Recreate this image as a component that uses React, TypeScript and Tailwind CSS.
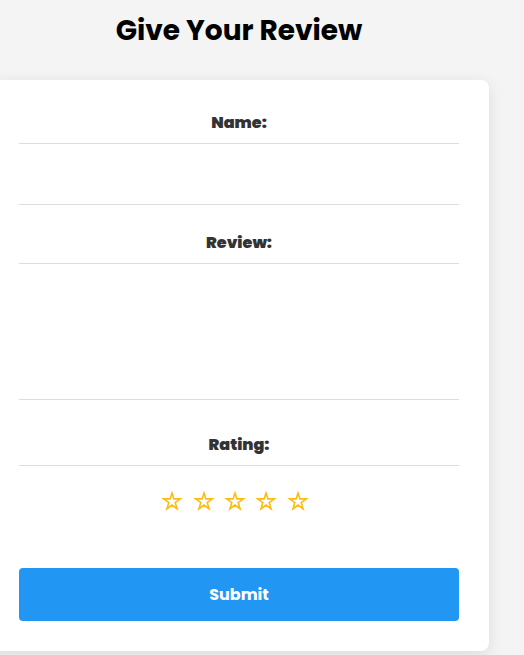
import { useState } from "react";

const labelClass =
  "block h-[34px] border-b border-[#dddddd] pt-px text-center text-base leading-6 font-black text-[#333333]";
const fieldClass =
  "block w-full resize-none border-b border-[#dddddd] bg-transparent px-3 text-base text-[#333333] outline-none";

function Star({ filled }: { filled: boolean }) {
  return (
    <svg viewBox="0 0 22 22" className="size-[22px]" aria-hidden="true">
      <path
        d="M11 3 L12.9 8.9 L19.3 8.9 L14.2 12.5 L16.1 18.9 L11 15.1 L5.9 18.9 L7.8 12.5 L2.7 8.9 L9.1 8.9 Z"
        fill={filled ? "#fdbc12" : "none"}
        stroke="#fdbc12"
        strokeWidth="1.6"
        strokeLinejoin="miter"
      />
    </svg>
  );
}

export default function App() {
  const [rating, setRating] = useState(0);

  return (
    <main className="min-h-screen overflow-hidden bg-[#f4f4f4] pb-1 font-['Poppins','Inter',sans-serif]">
      <div className="mr-[35px] -ml-[11px]">
        <h1 className="pt-2 text-center text-[28px] leading-[46px] font-bold text-black">
          Give Your Review
        </h1>
        <form
          className="mt-[26px] rounded-lg bg-white p-[30px] shadow-[0_4px_16px_rgba(0,0,0,0.1)]"
          onSubmit={(event) => event.preventDefault()}
        >
          <label htmlFor="name" className={labelClass}>
            Name:
          </label>
          <input id="name" type="text" className={`${fieldClass} h-[61px]`} />

          <label htmlFor="review" className={`${labelClass} mt-[25px]`}>
            Review:
          </label>
          <textarea id="review" className={`${fieldClass} h-[136px] py-3`} />

          <fieldset className="mt-8">
            <legend className={`${labelClass} w-full`}>Rating:</legend>
            <div className="flex justify-center pt-6 pr-2">
              <div className="grid w-[157px] grid-cols-5 justify-items-center">
                {[1, 2, 3, 4, 5].map((value) => (
                  <label key={value} className="cursor-pointer">
                    <input
                      type="radio"
                      name="rating"
                      value={value}
                      aria-label={`${value}`}
                      checked={rating === value}
                      onChange={() => setRating(value)}
                      className="sr-only"
                    />
                    <Star filled={value <= rating} />
                  </label>
                ))}
              </div>
            </div>
          </fieldset>

          <button
            type="submit"
            className="mt-14 block h-[53px] w-full cursor-pointer rounded bg-[#2196f3] text-base font-bold text-white"
          >
            Submit
          </button>
        </form>
      </div>
    </main>
  );
}
